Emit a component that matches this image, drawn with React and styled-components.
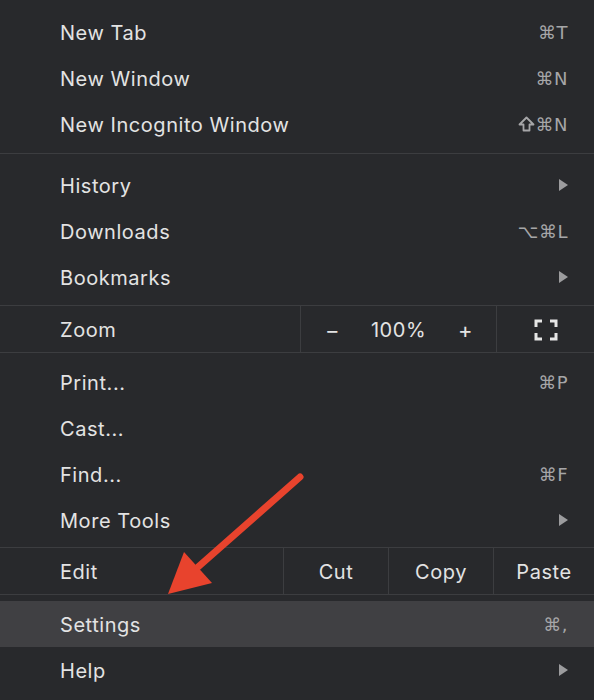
import React from "react";
import styled, { createGlobalStyle } from "styled-components";

const GlobalStyle = createGlobalStyle`
  html, body {
    margin: 0;
    padding: 0;
    background: #28292c;
  }
  body {
    font-family: Inter, "Noto Sans", "DejaVu Sans", sans-serif;
  }
`;

const Menu = styled.div`
  position: relative;
  width: 594px;
  height: 700px;
  overflow: hidden;
  background: #28292c;
  color: #e3e3e3;
`;

const Group = styled.div`
  padding: ${p => p.pad || "6px 0 5px"};
`;

const Line = styled.div`
  height: 1px;
  background: #3c3d40;
`;

const Item = styled.div`
  height: 46px;
  display: flex;
  align-items: center;
  justify-content: space-between;
  padding: 0 26px 0 60px;
  background: ${p => (p.active ? "#404043" : "transparent")};
`;

const Label = styled.span`
  font-size: 20px;
  letter-spacing: 0.55px;
  padding-top: 1px;
`;

const Shortcut = styled.span`
  font-family: "DejaVu Sans", Inter, sans-serif;
  font-size: 18px;
  color: #a6a6a8;
  letter-spacing: 0.5px;
  display: flex;
  align-items: center;
  gap: 1px;
`;

const Triangle = styled.span`
  width: 0;
  height: 0;
  border-top: 6px solid transparent;
  border-bottom: 6px solid transparent;
  border-left: 9px solid #9c9c9e;
`;

const SplitRow = styled.div`
  display: grid;
  grid-template-columns: ${p => p.cols};
  height: 46px;
  border-top: 1px solid #3c3d40;
  border-bottom: 1px solid #3c3d40;
`;

const Cell = styled.div`
  display: flex;
  align-items: center;
  justify-content: ${p => (p.left ? "flex-start" : "center")};
  padding-left: ${p => (p.left ? "60px" : "0")};
  padding-top: 2px;
  font-size: 20px;
  letter-spacing: 0.55px;
  & + & {
    border-left: 1px solid #3c3d40;
  }
`;

const ZoomControls = styled.div`
  display: flex;
  align-items: center;
  gap: 32px;
  font-size: 20px;
`;

const Sign = styled.span`
  font-size: 22px;
  width: 14px;
  text-align: center;
`;

const Overlay = styled.svg`
  position: absolute;
  inset: 0;
  pointer-events: none;
`;

const FullscreenIcon = () => (
  <svg width="24" height="22" viewBox="0 0 24 22" fill="none" stroke="#e6e6e6" strokeWidth="3">
    <path d="M2 8V2H8" />
    <path d="M16 2H22V8" />
    <path d="M22 14V20H16" />
    <path d="M8 20H2V14" />
  </svg>
);

// outlined shift arrow, the font's own glyph is too narrow
const ShiftIcon = () => (
  <svg width="17" height="16" viewBox="0 0 17 16" fill="none" stroke="#a6a6a8" strokeWidth="1.8" strokeLinejoin="round">
    <path d="M8.5 1.5L15.5 8.5H11.5V14.5H5.5V8.5H1.5Z" />
  </svg>
);

const MenuItem = ({ label, shortcut, shift, submenu, active }) => (
  <Item active={active}>
    <Label>{label}</Label>
    {shortcut && (
      <Shortcut>
        {shift && <ShiftIcon />}
        {shortcut}
      </Shortcut>
    )}
    {submenu && <Triangle />}
  </Item>
);

export default function App() {
  return (
    <>
      <GlobalStyle />
      <Menu>
        <Group pad="9px 0 6px">
          <MenuItem label="New Tab" shortcut="⌘T" />
          <MenuItem label="New Window" shortcut="⌘N" />
          <MenuItem label="New Incognito Window" shortcut="⌘N" shift />
        </Group>
        <Line />
        <Group pad="8px 0 5px">
          <MenuItem label="History" submenu />
          <MenuItem label="Downloads" shortcut="⌥⌘L" />
          <MenuItem label="Bookmarks" submenu />
        </Group>
        <SplitRow cols="300px 196px 1fr">
          <Cell left>Zoom</Cell>
          <Cell>
            <ZoomControls>
              <Sign>−</Sign>
              <span>100%</span>
              <Sign>+</Sign>
            </ZoomControls>
          </Cell>
          <Cell>
            <FullscreenIcon />
          </Cell>
        </SplitRow>
        <Group pad="6px 0 4px">
          <MenuItem label="Print..." shortcut="⌘P" />
          <MenuItem label="Cast..." />
          <MenuItem label="Find..." shortcut="⌘F" />
          <MenuItem label="More Tools" submenu />
        </Group>
        <SplitRow cols="283px 105px 105px 1fr">
          <Cell left>Edit</Cell>
          <Cell>Cut</Cell>
          <Cell>Copy</Cell>
          <Cell>Paste</Cell>
        </SplitRow>
        <Group pad="6px 0 0">
          <MenuItem label="Settings" shortcut="⌘," active />
          <MenuItem label="Help" submenu />
        </Group>

        <Overlay width="594" height="700" viewBox="0 0 594 700">
          <line x1="300" y1="477" x2="198" y2="567" stroke="#e8432d" strokeWidth="7" strokeLinecap="round" />
          <polygon points="168,594 184,552 212,583" fill="#e8432d" />
        </Overlay>
      </Menu>
    </>
  );
}
